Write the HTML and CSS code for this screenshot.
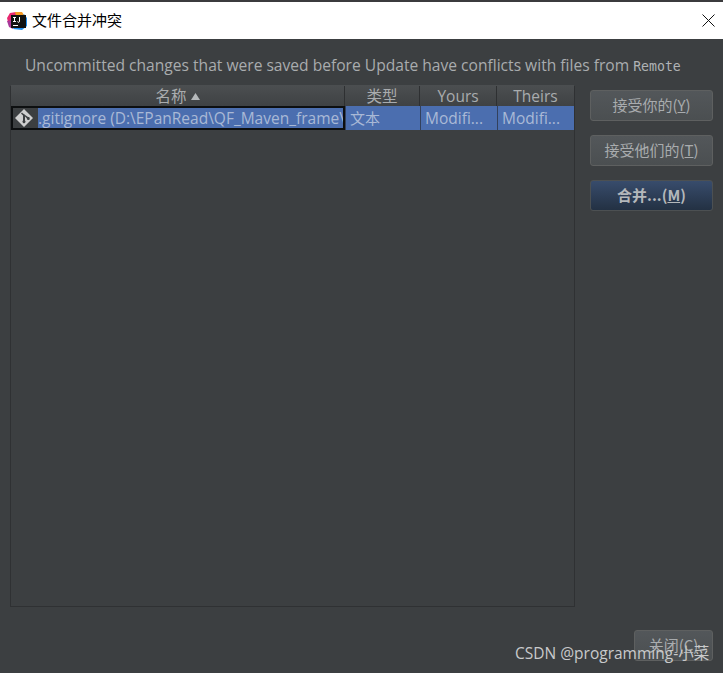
FILE: index.html
```html
<!DOCTYPE html>
<html lang="zh">
<head>
<meta charset="utf-8">
<title>文件合并冲突</title>
<link rel="stylesheet" href="styles.css">
</head>
<body>
<div class="topstrip"></div>
<header class="titlebar">
  <svg class="logo" width="20" height="18" viewBox="0 0 20 18">
    <path d="M0 6 L3 1 L9 0 L11 3 L4 9 L1 10 Z" fill="#e8286f"/>
    <path d="M8 0 L15 0 L17 3 L9 4 Z" fill="#f59a23"/>
    <path d="M0 9 L5 8 L6 17 L2 15 Z" fill="#a8389a"/>
    <path d="M17 2 L20 6 L20 14 L15 18 L6 17 L8 14 Z" fill="#1f8ff0"/>
    <rect x="4" y="3" width="15" height="13" fill="#111"/>
    <rect x="6" y="13" width="5" height="1" fill="#fff"/>
    <path d="M6 5.500h3M7.500 5.500v4M6 9.500h3M12.500 5v4a1 1 0 0 1-2 .5" fill="none" stroke="#fff" stroke-width="1"/>
  </svg>
  <span class="title">文件合并冲突</span>
  <svg class="close-x" width="13" height="13" viewBox="0 0 13 13"><path d="M.5.5l12 12M12.500.5l-12 12" fill="none" stroke="#111" stroke-width="1"/></svg>
</header>
<main class="dialog">
  <p class="message">Uncommitted changes that were saved before Update have conflicts with files from <code class="mono">Remote</code></p>
  <div class="content">
    <div class="table">
      <div class="row head">
        <div class="cell c-name">名称<svg class="sort" width="9" height="7" viewBox="0 0 9 7"><path d="M4.500 0L9 7H0z" fill="#b5b8ba"/></svg></div>
        <div class="cell c-type">类型</div>
        <div class="cell c-mod">Yours</div>
        <div class="cell c-mod last">Theirs</div>
      </div>
      <div class="row body">
        <div class="cell c-name focus">
          <svg class="git" width="20" height="20" viewBox="0 0 20 20">
            <path fill-rule="evenodd" fill="#cfcfcf" d="M10 1l9 9-9 9-9-9zM8 4.500l-1 1 2 2v5.100a1.500 1.500 0 1 0 2 0V8.500l1.800 1.800a1.500 1.500 0 1 0 1.200-1.200L10.700 6.800a1.500 1.500 0 0 0-1.500-1.100z"/>
          </svg>
          <span class="fname">.gitignore (D:\EPanRead\QF_Maven_frame\.gitignore)</span>
        </div>
        <div class="cell c-type left"><span class="lift">文本</span></div>
        <div class="cell c-mod left">Modifi...</div>
        <div class="cell c-mod left last">Modifi...</div>
      </div>
    </div>
    <div class="actions">
      <button class="btn">接受你的(<u>Y</u>)</button>
      <button class="btn">接受他们的(<u>T</u>)</button>
      <button class="btn primary">合并...(<u>M</u>)</button>
    </div>
  </div>
  <div class="footer"><button class="btn close">关闭(<u>C</u>)</button></div>
</main>
<div class="watermark">CSDN @programming-小菜</div>
</body>
</html>
```
FILE: styles.css
```css
* { box-sizing: border-box; }
html, body { margin: 0; height: 100%; }
body {
  position: relative;
  width: 723px;
  height: 673px;
  overflow: hidden;
  display: flex;
  flex-direction: column;
  background: #3c3f41;
  font-family: "Open Sans", "Noto Sans CJK SC", sans-serif;
  color: #bbbbbb;
}
.topstrip { height: 2px; background: #3b3b3d; flex: none; }
.titlebar {
  height: 37px;
  flex: none;
  display: flex;
  align-items: center;
  background: #fff;
  padding: 0 8px 0 7px;
}
.logo { flex: none; }
.title {
  margin-left: 5px;
  padding-bottom: 1px;
  font: 15px/20px "Noto Sans CJK SC", sans-serif;
  color: #000;
}
.close-x { margin-left: auto; }
.dialog {
  flex: 1;
  display: flex;
  flex-direction: column;
  padding: 0 10px 12px 10px;
}
.message {
  margin: 15px 0 0 15px;
  padding-top: 1px;
  height: 31px;
  font-size: 15.6px;
  line-height: 21px;
  white-space: nowrap;
  color: #a9acae;
}
.mono { font: 13.2px "DejaVu Sans Mono", monospace; color: #b0b3b5; }
.content { flex: 1; display: flex; min-height: 0; gap: 15px; }
.table {
  width: 565px;
  height: 522px;
  border: 1px solid #2f3133;
  border-top-color: #4b4e50;
  background: #3c3f41;
}
.row { display: flex; }
.head {
  height: 20px;
  background: linear-gradient(#4b4e50, #3f4244);
  font-size: 15.5px;
  line-height: 20px;
  color: #a9acae;
}
.head .cell { justify-content: center; border-right: 1px solid #2e3032; }
.body { height: 24px; background: #4b6eaf; color: #a9b9d6; font-size: 15.5px; }
.cell {
  display: flex;
  align-items: center;
  flex: none;
  overflow: hidden;
  white-space: nowrap;
}
.c-name { width: 334px; }
.c-type { width: 75px; }
.c-mod { width: 77px; }
.last { border-right: 0 !important; }
.sort { margin-left: 4px; }
.focus {
  border: 2px solid #0d0f10;
  padding-left: 1px;
  background: linear-gradient(#3c3f41, #3c3f41) no-repeat left / 25px 100%, #4b6eaf;
}
.git { flex: none; margin-right: 4px; }
.fname { color: #a9b9d6; }
.left { padding-left: 4px; border-left: 1px solid #33415c; }
.c-type.left { font-size: 15px; }
.lift { padding-bottom: 2px; }
.actions {
  display: flex;
  flex-direction: column;
  gap: 14px;
  padding-top: 5px;
  width: 123px;
}
.btn {
  width: 123px;
  height: 31px;
  padding: 0 0 2px;
  border: 1px solid #5e6060;
  border-radius: 3px;
  background: linear-gradient(#53575a, #4b4f51);
  font: 15px/20px "Noto Sans CJK SC", "Open Sans", sans-serif;
  color: #a9acae;
}
.primary {
  background: linear-gradient(#384c6c, #233143);
  border-color: #4c5052;
  font-weight: 700;
  color: #b4b8bb;
}
.footer { display: flex; justify-content: flex-end; }
.close { width: 79px; }
.watermark {
  position: absolute;
  left: 515px;
  top: 643px;
  font: 15.5px/20px "Open Sans", "Noto Sans CJK SC", sans-serif;
  color: #c9cacb;
  white-space: nowrap;
}
```
